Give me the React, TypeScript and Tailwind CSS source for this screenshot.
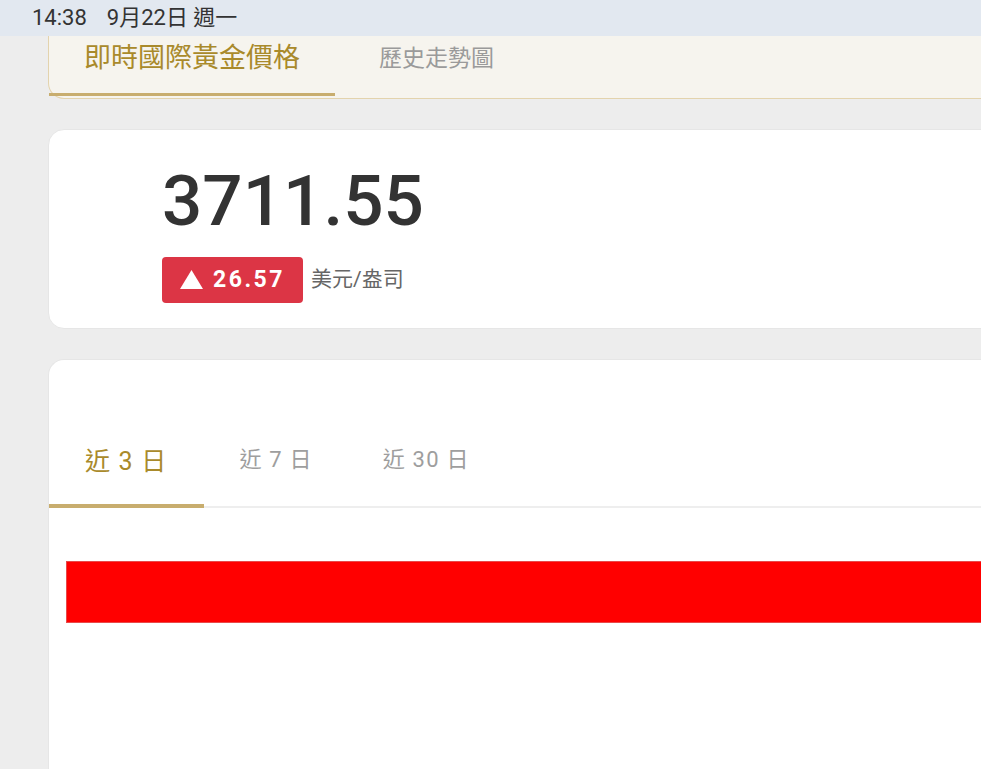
import React from "react";

const font = { fontFamily: 'Roboto, "Noto Sans CJK TC", "Noto Sans", sans-serif' };

export default function App() {
  return (
    <div className="w-[981px] h-[769px] overflow-hidden bg-[#ededed] relative" style={font}>
      <div className="h-[36px] bg-[#e2e8f0] flex items-center pl-[32px] text-[22px] text-[#333] leading-none">
        <span>14:38</span>
        <span className="ml-[20px]">9月22日 週一</span>
      </div>

      <div className="ml-[48px] w-[1100px] h-[63px] bg-[#f6f4ee] border-l border-b border-[#e3d3ad] rounded-bl-[16px] flex">
        <div className="w-[286px] h-[60px] border-b-[3px] border-[#c8ad6e] flex justify-center pt-[4px] text-[27px] leading-[36px] text-[#a98a2b]">
          即時國際黃金價格
        </div>
        <div className="pl-[44px] pt-[5px] text-[23px] leading-[36px] text-[#9a9a9a]">歷史走勢圖</div>
      </div>

      <div className="ml-[48px] mt-[30px] w-[1100px] h-[200px] bg-white rounded-[16px] border border-[#e6e6e6] pl-[113px] pt-[31px]">
        <div className="text-[71px] leading-[80px] font-medium text-[#333]">3711.55</div>
        <div className="flex items-center mt-[16px]">
          <div className="h-[46px] w-[141px] bg-[#dc3545] rounded-[4px] flex items-center justify-center text-white text-[23px] font-bold tracking-[2.5px]">
            <svg width="23" height="19" viewBox="0 0 23 19" className="mr-[10px] -mt-[2px]">
              <polygon points="11.5,0 23,19 0,19" fill="white" />
            </svg>
            26.57
          </div>
          <span className="ml-[8px] text-[21px] text-[#666]">美元/盎司</span>
        </div>
      </div>

      <div className="ml-[48px] mt-[30px] w-[1100px] h-[500px] bg-white rounded-t-[16px] border-t border-l border-[#e6e6e6]">
        <div className="mt-[80px] flex border-b-2 border-[#eeeeee] h-[68px]">
          <div className="pl-[36px] pr-[37px] pt-[4px] text-[25px] leading-[36px] text-[#a98a2b] border-b-[4px] border-[#c8ad6e] -mb-[2px] tracking-[1.2px]">
            近 3 日
          </div>
          <div className="px-[35px] pt-[2px] text-[22px] leading-[36px] text-[#9e9e9e] tracking-[1.2px]">近 7 日</div>
          <div className="px-[35px] pt-[2px] text-[22px] leading-[36px] text-[#9e9e9e] tracking-[1.2px]">近 30 日</div>
        </div>
        <div className="ml-[17px] mt-[53px] h-[62px] bg-[#ff0000] border border-[#e84a4a]" />
      </div>
    </div>
  );
}
